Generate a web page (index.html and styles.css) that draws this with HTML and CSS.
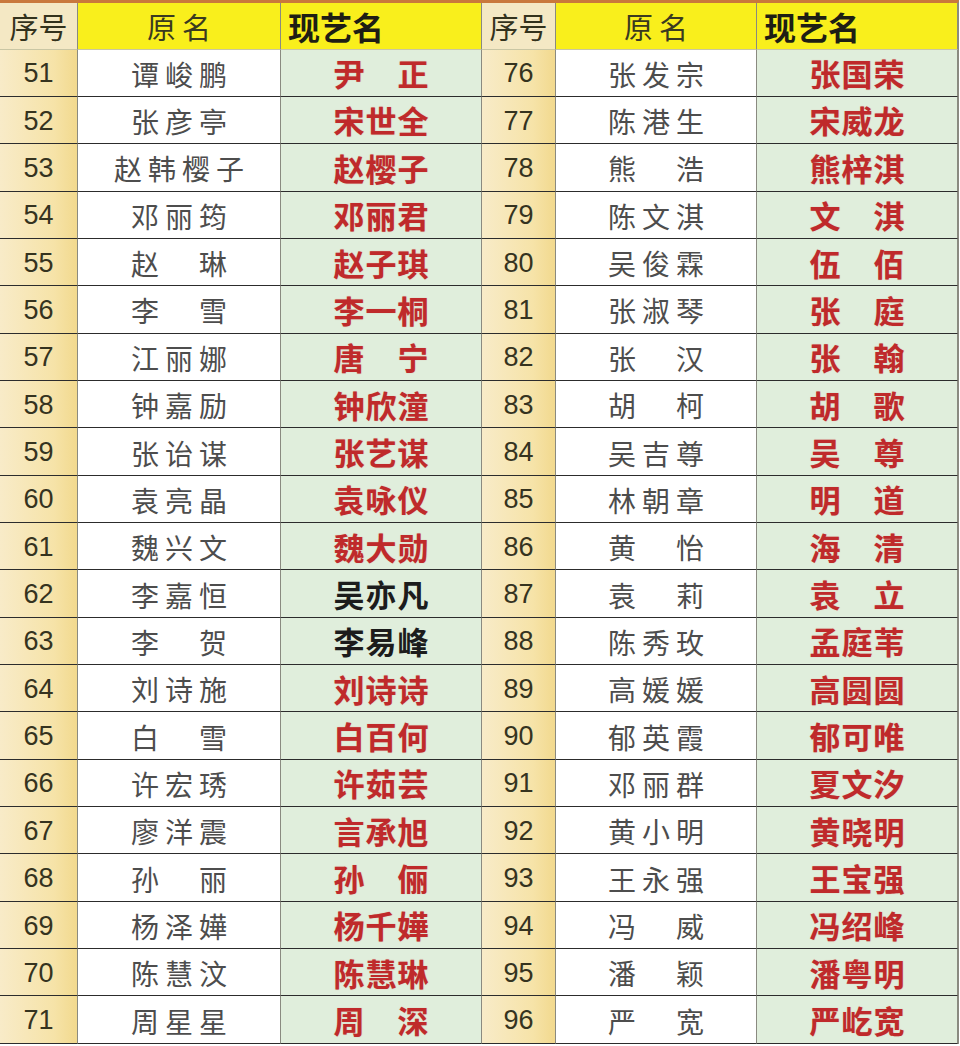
FILE: index.html
```html
<!DOCTYPE html>
<html lang="zh-CN">
<head>
<meta charset="utf-8">
<title>原名与现艺名</title>
<link rel="stylesheet" href="styles.css">
</head>
<body>
<div class="sheet" id="sheet">
  <div class="cell h num">序号</div>
  <div class="cell h orig">原名</div>
  <div class="cell h stage">现艺名</div>
  <div class="cell h num">序号</div>
  <div class="cell h orig">原名</div>
  <div class="cell h stage">现艺名</div>

  <div class="cell num">51</div><div class="cell orig">谭峻鹏</div><div class="cell art">尹　正</div>
  <div class="cell num">76</div><div class="cell orig">张发宗</div><div class="cell art">张国荣</div>

  <div class="cell num">52</div><div class="cell orig">张彦亭</div><div class="cell art">宋世全</div>
  <div class="cell num">77</div><div class="cell orig">陈港生</div><div class="cell art">宋威龙</div>

  <div class="cell num">53</div><div class="cell orig">赵韩樱子</div><div class="cell art">赵樱子</div>
  <div class="cell num">78</div><div class="cell orig">熊　浩</div><div class="cell art">熊梓淇</div>

  <div class="cell num">54</div><div class="cell orig">邓丽筠</div><div class="cell art">邓丽君</div>
  <div class="cell num">79</div><div class="cell orig">陈文淇</div><div class="cell art">文　淇</div>

  <div class="cell num">55</div><div class="cell orig">赵　琳</div><div class="cell art">赵子琪</div>
  <div class="cell num">80</div><div class="cell orig">吴俊霖</div><div class="cell art">伍　佰</div>

  <div class="cell num">56</div><div class="cell orig">李　雪</div><div class="cell art">李一桐</div>
  <div class="cell num">81</div><div class="cell orig">张淑琴</div><div class="cell art">张　庭</div>

  <div class="cell num">57</div><div class="cell orig">江丽娜</div><div class="cell art">唐　宁</div>
  <div class="cell num">82</div><div class="cell orig">张　汉</div><div class="cell art">张　翰</div>

  <div class="cell num">58</div><div class="cell orig">钟嘉励</div><div class="cell art">钟欣潼</div>
  <div class="cell num">83</div><div class="cell orig">胡　柯</div><div class="cell art">胡　歌</div>

  <div class="cell num">59</div><div class="cell orig">张诒谋</div><div class="cell art">张艺谋</div>
  <div class="cell num">84</div><div class="cell orig">吴吉尊</div><div class="cell art">吴　尊</div>

  <div class="cell num">60</div><div class="cell orig">袁亮晶</div><div class="cell art">袁咏仪</div>
  <div class="cell num">85</div><div class="cell orig">林朝章</div><div class="cell art">明　道</div>

  <div class="cell num">61</div><div class="cell orig">魏兴文</div><div class="cell art">魏大勋</div>
  <div class="cell num">86</div><div class="cell orig">黄　怡</div><div class="cell art">海　清</div>

  <div class="cell num">62</div><div class="cell orig">李嘉恒</div><div class="cell art black">吴亦凡</div>
  <div class="cell num">87</div><div class="cell orig">袁　莉</div><div class="cell art">袁　立</div>

  <div class="cell num">63</div><div class="cell orig">李　贺</div><div class="cell art black">李易峰</div>
  <div class="cell num">88</div><div class="cell orig">陈秀玫</div><div class="cell art">孟庭苇</div>

  <div class="cell num">64</div><div class="cell orig">刘诗施</div><div class="cell art">刘诗诗</div>
  <div class="cell num">89</div><div class="cell orig">高媛媛</div><div class="cell art">高圆圆</div>

  <div class="cell num">65</div><div class="cell orig">白　雪</div><div class="cell art">白百何</div>
  <div class="cell num">90</div><div class="cell orig">郁英霞</div><div class="cell art">郁可唯</div>

  <div class="cell num">66</div><div class="cell orig">许宏琇</div><div class="cell art">许茹芸</div>
  <div class="cell num">91</div><div class="cell orig">邓丽群</div><div class="cell art">夏文汐</div>

  <div class="cell num">67</div><div class="cell orig">廖洋震</div><div class="cell art">言承旭</div>
  <div class="cell num">92</div><div class="cell orig">黄小明</div><div class="cell art">黄晓明</div>

  <div class="cell num">68</div><div class="cell orig">孙　丽</div><div class="cell art">孙　俪</div>
  <div class="cell num">93</div><div class="cell orig">王永强</div><div class="cell art">王宝强</div>

  <div class="cell num">69</div><div class="cell orig">杨泽嬅</div><div class="cell art">杨千嬅</div>
  <div class="cell num">94</div><div class="cell orig">冯　威</div><div class="cell art">冯绍峰</div>

  <div class="cell num">70</div><div class="cell orig">陈慧汶</div><div class="cell art">陈慧琳</div>
  <div class="cell num">95</div><div class="cell orig">潘　颖</div><div class="cell art">潘粤明</div>

  <div class="cell num">71</div><div class="cell orig">周星星</div><div class="cell art">周　深</div>
  <div class="cell num">96</div><div class="cell orig">严　宽</div><div class="cell art">严屹宽</div>
</div>
</body>
</html>
```

FILE: styles.css
```css
html, body {
  margin: 0;
  padding: 0;
  background: #ffffff;
  overflow: hidden;
}

.sheet {
  display: grid;
  grid-template-columns: 78px 203px 201px 74px 201px 201px;
  grid-template-rows: 46.5px repeat(21, 47.35px);
  width: 958px;
  border-top: 3px solid #c9783c;
  border-right: 1px solid #8a8a80;
  box-sizing: content-box;
}

.cell {
  box-sizing: border-box;
  display: flex;
  align-items: center;
  justify-content: center;
  border-right: 1px solid #8a8a80;
  border-bottom: 1px solid #2c2c2c;
  font-family: "Noto Sans CJK SC", "Noto Sans", sans-serif;
  line-height: 1.1;
  white-space: nowrap;
  overflow: hidden;
  padding-top: 3px;
}

.cell.num {
  font-family: "Liberation Sans", "Noto Sans CJK SC", sans-serif;
  font-size: 27px;
  color: #35331f;
  background: linear-gradient(to right, #f8ebc8 0%, #f6e3a8 70%, #f2d98e 100%);
}

.cell.orig {
  font-size: 28px;
  letter-spacing: 6px;
  text-indent: 6px;
  color: #4d4d4d;
  background: #ffffff;
}

.cell.art {
  font-size: 31px;
  font-weight: 700;
  letter-spacing: 1px;
  text-indent: 1px;
  color: #bf2a2b;
  background: #e0eedc;
  text-shadow: 0 0 1px rgba(210, 70, 70, 0.45);
  padding-top: 1px;
}

.cell.art.black {
  color: #1c1c1c;
  text-shadow: none;
}

.cell.h {
  background: #f9ef1c;
  color: #33321c;
  border-bottom: 1px solid #c9c6a4;
  padding-top: 2px;
}

.cell.h.num {
  font-family: "Noto Sans CJK SC", "Noto Sans", sans-serif;
  font-size: 29px;
  background: #f4e8c4;
}

.cell.h.orig {
  font-size: 29px;
  letter-spacing: 6px;
  text-indent: 6px;
  color: #3a3a20;
  background: #f9ef1c;
}

.cell.h.stage {
  justify-content: flex-start;
  padding-left: 7px;
  font-size: 32px;
  font-weight: 700;
  color: #1e1e14;
}
```
